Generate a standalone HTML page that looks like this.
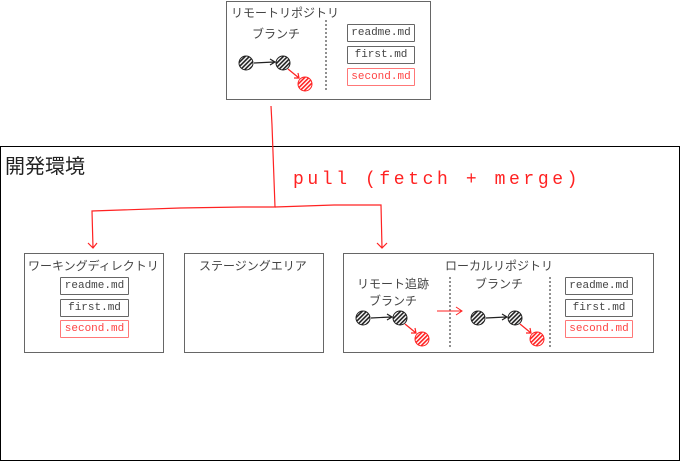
<!DOCTYPE html>
<html><head><meta charset="utf-8"><style>
body{margin:0;width:680px;height:461px;background:#fff;overflow:hidden;position:relative;font-family:"Liberation Sans","Noto Sans CJK JP",sans-serif;}
.a{position:absolute;white-space:nowrap;}
.t{font-size:12px;color:#444;}
.f{position:absolute;border:1px solid #666;border-radius:1px;font-family:"Liberation Mono",monospace;font-size:11px;color:#444;text-align:center;line-height:16px;box-sizing:border-box;height:18px;}
.r{border-color:#f77;color:#f44;}
.box{position:absolute;border:1px solid #666;box-sizing:border-box;}
</style></head><body>
<div class="box" style="left:226px;top:1px;width:205px;height:99px"></div>
<div class="box" style="left:0;top:146px;width:680px;height:315px;border-color:#000"></div>
<div class="box" style="left:24px;top:253px;width:140px;height:100px"></div>
<div class="box" style="left:184px;top:253px;width:140px;height:100px"></div>
<div class="box" style="left:343px;top:253px;width:311px;height:100px"></div>

<div class="a t" style="left:231px;top:4px">リモートリポジトリ</div>
<div class="a t" style="left:252px;top:25px">ブランチ</div>
<div class="f" style="left:347px;top:24px;width:68px">readme.md</div>
<div class="f" style="left:347px;top:46px;width:68px">first.md</div>
<div class="f r" style="left:347px;top:68px;width:68px">second.md</div>

<div class="a" style="left:5px;top:150px;font-size:20px;color:#222">開発環境</div>
<div class="a" style="left:293px;top:170px;font-size:18px;color:#f22;font-family:'Liberation Mono',monospace;letter-spacing:3.6px">pull (fetch + merge)</div>

<div class="a t" style="left:28px;top:257px">ワーキングディレクトリ</div>
<div class="f" style="left:60px;top:277px;width:69px">readme.md</div>
<div class="f" style="left:60px;top:299px;width:69px">first.md</div>
<div class="f r" style="left:60px;top:320px;width:69px">second.md</div>

<div class="a t" style="left:199px;top:257px">ステージングエリア</div>

<div class="a t" style="left:445px;top:257px">ローカルリポジトリ</div>
<div class="a t" style="left:357px;top:275px">リモート追跡</div>
<div class="a t" style="left:369px;top:292px">ブランチ</div>
<div class="a t" style="left:475px;top:275px">ブランチ</div>
<div class="f" style="left:565px;top:277px;width:68px">readme.md</div>
<div class="f" style="left:565px;top:299px;width:68px">first.md</div>
<div class="f r" style="left:565px;top:320px;width:68px">second.md</div>

<svg class="a" style="left:0;top:0" width="680" height="461">
<defs>
<pattern id="hk" width="3" height="3" patternUnits="userSpaceOnUse" patternTransform="rotate(45)"><rect width="3" height="3" fill="#fff"/><rect width="1.6" height="3" fill="#222"/></pattern>
<pattern id="hr" width="3" height="3" patternUnits="userSpaceOnUse" patternTransform="rotate(45)"><rect width="3" height="3" fill="#fff"/><rect width="1.6" height="3" fill="#f22"/></pattern>
<g id="br">
<circle cx="0" cy="0" r="7" fill="url(#hk)" stroke="#222"/>
<circle cx="37" cy="0" r="7" fill="url(#hk)" stroke="#222"/>
<circle cx="59" cy="21" r="7" fill="url(#hr)" stroke="#f22"/>
<path d="M8 0 L28 -1 M24 -4 L29 -1 L24 2" stroke="#222" fill="none" stroke-width="1.2"/>
<path d="M42 6 L53 15 M48 15 L53 15 L52 10" stroke="#f22" fill="none" stroke-width="1.2"/>
</g>
</defs>
<use href="#br" x="246" y="63"/>
<use href="#br" x="363" y="318"/>
<use href="#br" x="478" y="318"/>
<line x1="326" y1="20" x2="326" y2="91" stroke="#222" stroke-dasharray="2,2"/>
<line x1="450" y1="277" x2="450" y2="349" stroke="#222" stroke-dasharray="2,2"/>
<line x1="550" y1="277" x2="550" y2="349" stroke="#222" stroke-dasharray="2,2"/>
<path d="M437 311 L462 311 M456 307 L462 311 L456 315" stroke="#f22" fill="none"/>
<path d="M271 106 L272 125 L275 207 L242 207 L180 208 L92 211 L93 248 M88 243 L93 248 L97 243" stroke="#f22" fill="none" stroke-width="1.2"/>
<path d="M275 207 L334 205 L381 205 L382 248 M377 243 L382 248 L387 243" stroke="#f22" fill="none" stroke-width="1.2"/>
</svg>
</body></html>
